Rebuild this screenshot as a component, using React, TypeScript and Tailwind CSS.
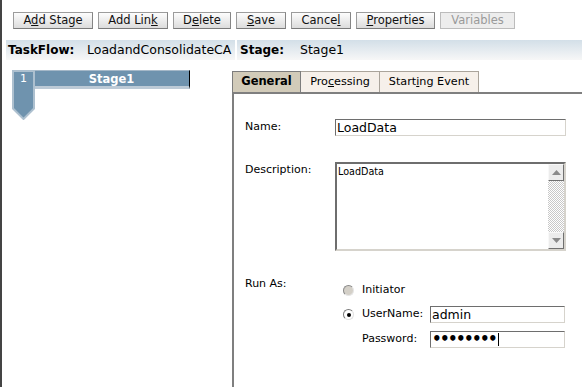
import React from "react";

const font = { fontFamily: '"DejaVu Sans", Verdana, sans-serif' };

function ToolButton({
	children,
	width,
	disabled,
}: {
	children: React.ReactNode;
	width: string;
	disabled?: boolean;
}) {
	return (
		<button
			className={
				disabled
					? `${width} h-[17px] border border-[#bcbcbc] bg-[#ededed] text-[11.5px] leading-[15px] text-[#9a9a9a]`
					: `${width} h-[17px] border border-[#9c9c9c] border-b-[#7a7a7a] border-r-[#858585] bg-linear-to-b from-[#fdfdfd] to-[#dcdcdc] text-[11.5px] leading-[15px] text-[#111]`
			}
		>
			{children}
		</button>
	);
}

function Input({ className, children }: { className: string; children?: React.ReactNode }) {
	return (
		<div
			className={`${className} h-[17px] border border-[#6e6e6e] border-b-[#d6d3cc] border-r-[#d6d3cc] bg-white flex items-center pl-[1px] text-[12.5px] leading-[15px] text-black`}
		>
			{children}
		</div>
	);
}

function ScrollArrow({ up }: { up?: boolean }) {
	return (
		<div className="w-[16px] h-[17px] bg-[#ececec] border border-[#f8f8f8] border-b-[#707070] border-r-[#707070] flex items-center justify-center">
			<svg width="9" height="5" viewBox="0 0 9 5">
				<path d={up ? "M0 5 L4.5 0 L9 5 Z" : "M0 0 L4.5 5 L9 0 Z"} fill="#8a8a8a" />
			</svg>
		</div>
	);
}

export default function App() {
	return (
		<div
			className="w-[582px] h-[387px] bg-white border-l-2 border-[#444] flex flex-col overflow-hidden"
			style={font}
		>
			{/* Toolbar */}
			<div className="flex gap-[5px] pl-[11px] pt-[12px]">
				<ToolButton width="w-[80px]">
					A<u>d</u>d Stage
				</ToolButton>
				<ToolButton width="w-[70px]">
					Add Lin<u>k</u>
				</ToolButton>
				<ToolButton width="w-[58px]">
					D<u>e</u>lete
				</ToolButton>
				<ToolButton width="w-[50px]">
					<u>S</u>ave
				</ToolButton>
				<ToolButton width="w-[60px]">
					Cance<u>l</u>
				</ToolButton>
				<ToolButton width="w-[79px]">
					<u>P</u>roperties
				</ToolButton>
				<ToolButton width="w-[75px]" disabled>
					Variables
				</ToolButton>
			</div>

			{/* Header */}
			<div className="flex gap-[2px] ml-[4px] mt-[11px] h-[20px] text-black">
				<div className="w-[229px] flex items-center pl-[2px] bg-linear-to-b from-[#d3dfe8] to-[#f7f7f7]">
					<span className="w-[79px] font-bold text-[12px]">TaskFlow:</span>
					<span className="text-[12.5px] whitespace-nowrap">LoadandConsolidateCA</span>
				</div>
				<div className="flex-1 flex items-center pl-[3px] bg-linear-to-b from-[#d3dfe8] to-[#f7f7f7]">
					<span className="w-[60px] font-bold text-[12px]">Stage:</span>
					<span className="text-[12.5px]">Stage1</span>
				</div>
			</div>

			{/* Body */}
			<div className="flex flex-1">
				{/* Stage tree */}
				<div className="w-[230px] pt-[10px] pl-[10px]">
					<div className="relative w-[178px] h-[50px]">
						<div className="h-[19px] bg-[#6f93ae] border-t border-[#a5b8c8] border-b-[3px] border-b-[#bccad6] border-r border-r-black flex items-center justify-center pl-[22px]">
							<span className="text-white font-bold text-[11.5px] leading-[14px]">Stage1</span>
						</div>
						<div className="absolute left-0 top-0 w-[23px] h-[50px]">
							<svg width="23" height="50" viewBox="0 0 23 50">
								<path
									d="M1 1 H22 V38.5 L11.5 49 L1 38.5 Z"
									fill="#6f93ae"
									stroke="#adc0cf"
									strokeWidth="2"
								/>
							</svg>
							<span className="absolute left-0 top-[2px] w-[23px] text-center text-white text-[11px] leading-[14px]">
								1
							</span>
						</div>
					</div>
				</div>

				{/* Properties panel */}
				<div className="flex-1 flex flex-col pt-[11px]">
					<div className="flex h-[21px] text-[11.2px] text-black">
						<div className="w-[69px] bg-[#d2cbb9] border-t border-l border-r border-[#7d7d7d] flex items-center justify-center font-bold text-[11.5px]">
							General
						</div>
						<div className="w-[79px] bg-[#f6f0ea] border-t border-r border-[#aaa49b] flex items-center justify-center">
							Pro<u>c</u>essing
						</div>
						<div className="w-[99px] bg-[#f6f0ea] border-t border-r border-[#aaa49b] flex items-center justify-center">
							Start<u>i</u>ng Event
						</div>
						<div className="flex-1" />
					</div>

					<div className="flex-1 border-t-2 border-l-2 border-[#7f7f7f] pl-[11px] pt-[25px] text-[11px] text-black">
						{/* Name */}
						<div className="flex">
							<div className="w-[90px] leading-[14px] pt-[1px]">Name:</div>
							<Input className="w-[231px]">LoadData</Input>
						</div>

						{/* Description */}
						<div className="flex mt-[26px]">
							<div className="w-[90px] leading-[14px] pt-[1px]">Description:</div>
							<div className="w-[231px] h-[89px] border-2 border-[#6e6e6e] border-b-[#d6d3cc] border-r-[#d6d3cc] bg-white flex">
								<div className="flex-1 text-[9.6px] leading-[12px] pl-[1px] pt-[2px]">LoadData</div>
								<div className="w-[16px] flex flex-col">
									<ScrollArrow up />
									<div className="flex-1 bg-[repeating-conic-gradient(#c8c8c8_0%_25%,#ffffff_0%_50%)] bg-[length:2px_2px]" />
									<ScrollArrow />
								</div>
							</div>
						</div>

						{/* Run As */}
						<div className="flex mt-[26px]">
							<div className="w-[90px] leading-[14px]">Run As:</div>
							<div className="flex flex-col pt-[5px]">
								<div className="flex items-center h-[17px]">
									<span className="ml-[8px] w-[11px] h-[11px] rounded-full border border-[#8a8a8a] border-b-[#e6e6e6] border-r-[#e6e6e6] bg-[#d4d0c8]" />
									<span className="ml-[8px]">Initiator</span>
								</div>
								<div className="flex items-center h-[17px] mt-[7px]">
									<span className="ml-[8px] w-[11px] h-[11px] rounded-full border border-[#7a7a7a] border-b-[#e0e0e0] border-r-[#e0e0e0] bg-white flex items-center justify-center">
										<span className="w-[4px] h-[4px] rounded-full bg-black" />
									</span>
									<span className="ml-[8px] w-[68px]">UserName:</span>
									<Input className="w-[135px]">admin</Input>
								</div>
								<div className="flex items-center h-[17px] mt-[8px]">
									<span className="ml-[27px] w-[68px]">Password:</span>
									<Input className="w-[135px]">
										<span className="text-[15px] font-bold leading-[15px] tracking-[-1.6px]">••••••••</span>
										<span className="ml-[2px] w-[1px] h-[13px] bg-black" />
									</Input>
								</div>
							</div>
						</div>
					</div>
				</div>
			</div>
		</div>
	);
}
